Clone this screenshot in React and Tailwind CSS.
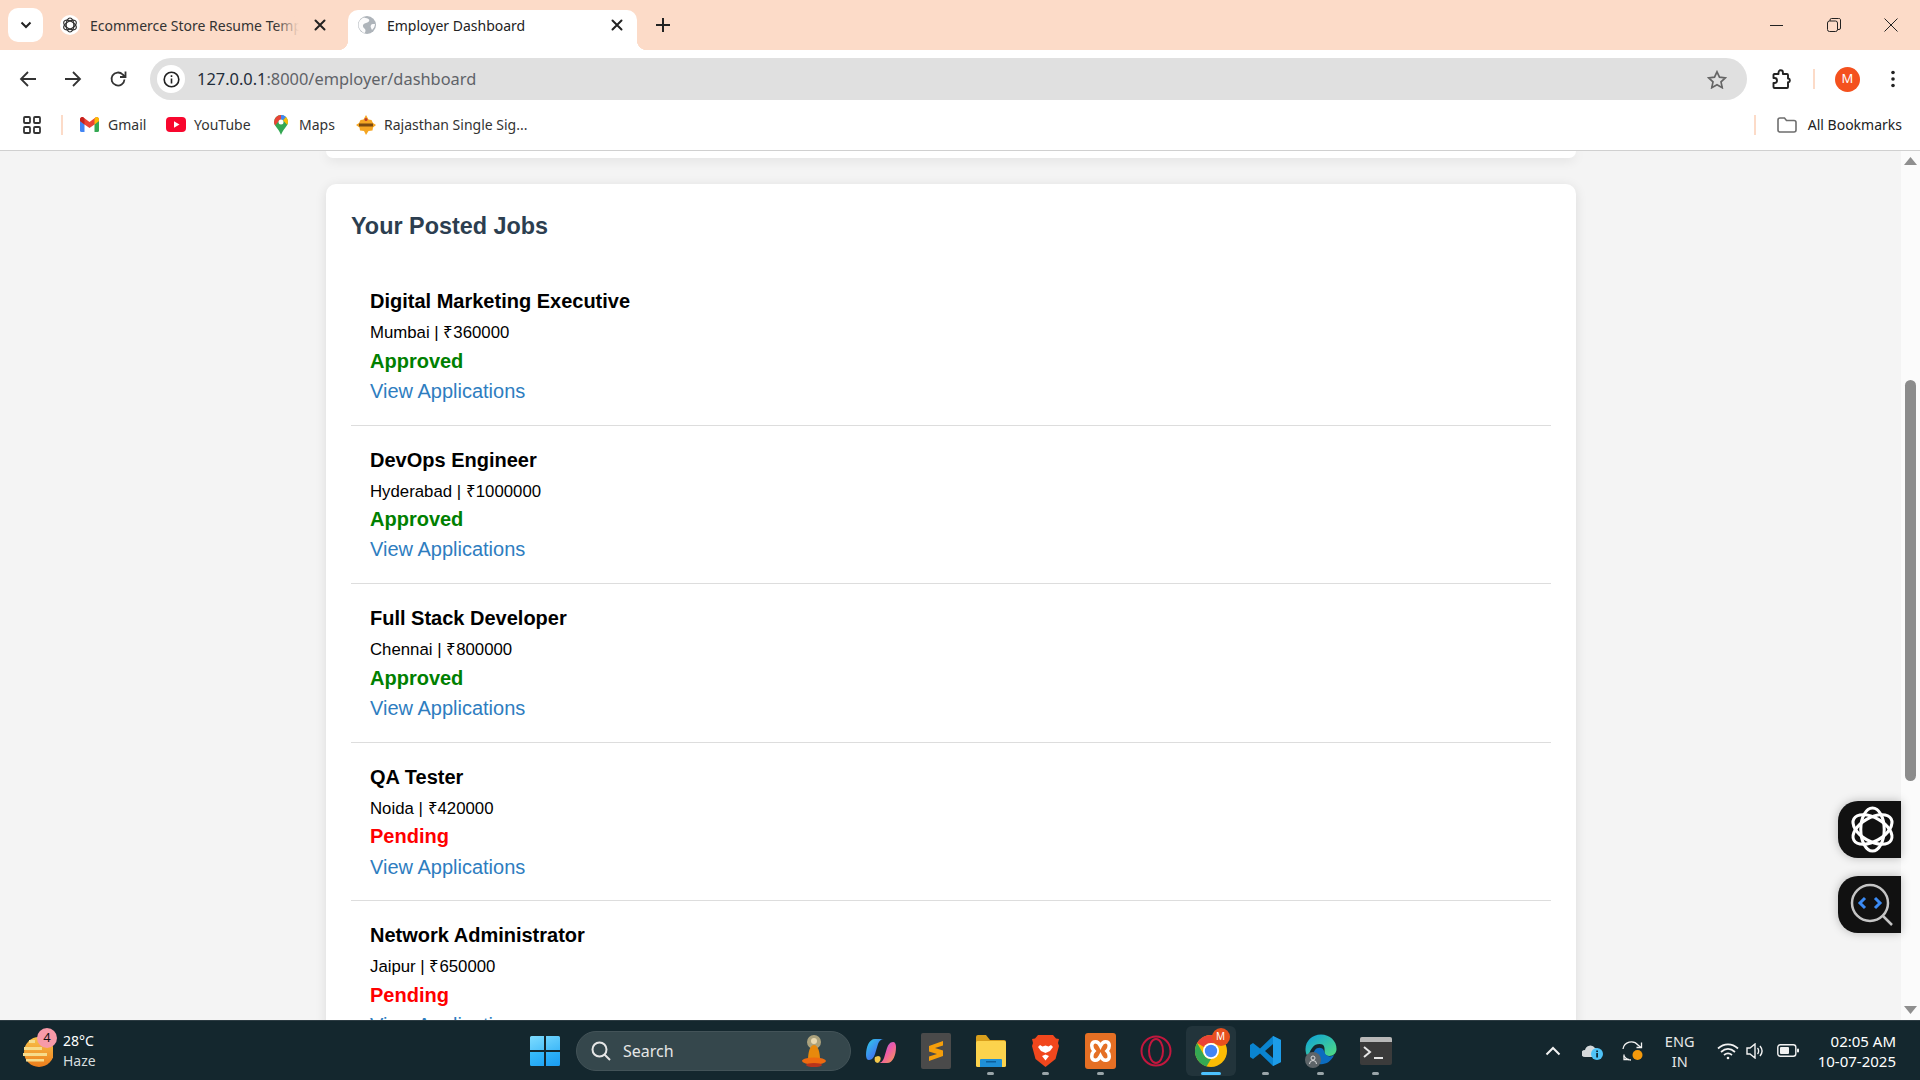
import React from "react";

const Knot = ({ size = 48, color = "#fff", sw = 3 }) => (
  <svg width={size} height={size} viewBox="0 0 48 48" fill="none" stroke={color} strokeWidth={sw}>
    <ellipse cx="24" cy="24" rx="21" ry="11.5" transform="rotate(30 24 24)" />
    <ellipse cx="24" cy="24" rx="21" ry="11.5" transform="rotate(90 24 24)" />
    <ellipse cx="24" cy="24" rx="21" ry="11.5" transform="rotate(150 24 24)" />
  </svg>
);
const Globe = () => (
  <svg width="18" height="18" viewBox="0 0 18 18">
    <circle cx="9" cy="9" r="9" fill="#aeb4ba" />
    <path d="M6 1.500c2 1 4 .5 5 2s-1 3-3 3.500-3.500 1.500-3 3.500 2.500 2 2.500 4-1 2.500-1.500 2.500C3 15.500.5 12 .5 9 .5 5.500 3 2.500 6 1.500zM17 8c-1.500 0-3-.5-4 1s0 3 1 5c1.500-1.500 3-3.500 3-6z" fill="#fff" opacity=".95" />
  </svg>
);
const X = ({ size = 12, sw = 2, color = "#222" }) => (
  <svg width={size} height={size} viewBox="0 0 12 12" stroke={color} strokeWidth={sw} strokeLinecap="round"><path d="M1.500 1.500l9 9M10.500 1.500l-9 9" /></svg>
);
const Arrow = ({ flip }) => (
  <svg width="18" height="18" viewBox="0 0 18 18" fill="none" stroke="#333" strokeWidth="1.800" className={flip ? "rotate-180" : ""}><path d="M17 9H2M9 2L2 9l7 7" /></svg>
);
const Reload = () => (
  <svg width="18" height="18" viewBox="0 0 18 18" fill="none" stroke="#333" strokeWidth="1.800"><path d="M15.500 9.500a6.500 6.500 0 1 1-1.800-5L16 6.500" /><path d="M16.500 1.500v5.500H11" fill="none" /></svg>
);
const Info = () => (
  <span className="w-[28px] h-[28px] rounded-full bg-white flex items-center justify-center">
    <svg width="17" height="17" viewBox="0 0 17 17" fill="none" stroke="#222" strokeWidth="1.600"><circle cx="8.500" cy="8.500" r="7.300" /><path d="M8.500 7.500v5M8.500 4.200v1.700" /></svg>
  </span>
);
const Gmail = () => (
  <svg width="19" height="15" viewBox="0 0 19 15">
    <path d="M0 3v10.500A1.500 1.500 0 0 0 1.500 15H4.500V7z" fill="#4285f4" />
    <path d="M19 3v10.500a1.500 1.500 0 0 1-1.500 1.500H14.500V7z" fill="#34a853" />
    <path d="M0 2.500C0 .5 2 -.5 3.500.5L9.500 5l6-4.500C17-.5 19 .5 19 2.500V4l-4.500 3.500-5 3.500-5-3.500L0 4z" fill="#ea4335" />
    <path d="M14.500 1.800l1-1.300C17-.5 19 .5 19 2.500V4l-4.500 3.500z" fill="#fbbc04" />
    <path d="M0 2.500C0 .5 2-.5 3.500.5l1 1.300v5.700L0 4z" fill="#c5221f" />
  </svg>
);
const YouTube = () => (
  <svg width="20" height="15" viewBox="0 0 20 15"><rect width="20" height="15" rx="4" fill="#f8072e" /><path d="M8 4.300v6.400l5.500-3.200z" fill="#fff" /></svg>
);
const MapsPin = () => (
  <svg width="14" height="20" viewBox="0 0 14 20">
    <path d="M7 0a7 7 0 0 1 7 7c0 4-5 7-7 13C5 14 0 11 0 7a7 7 0 0 1 7-7z" fill="#34a853" />
    <path d="M2 2.200A7 7 0 0 1 7 0v4.500A2.500 2.500 0 0 0 4.800 6L1.200 10.500C.4 9.300 0 8.200 0 7a7 7 0 0 1 2-4.800z" fill="#ea4335" />
    <path d="M7 0a7 7 0 0 1 5 2L9 5.200A2.500 2.500 0 0 0 7 4.500z" fill="#4285f4" />
    <path d="M12 2a7 7 0 0 1 2 5c0 1-.3 1.800-.8 2.800L9 5.200z" fill="#fbbc04" />
    <circle cx="7" cy="7" r="2.500" fill="#fff" />
  </svg>
);
const Rajasthan = () => (
  <svg width="20" height="20" viewBox="0 0 20 20">
    <path d="M10 0l2.500 4.500 3 .5 1.500 3 3 2-3 2.500-.5 3-4 .5L10 20l-2-4-4-.5-.5-3L0 10l3-2 1.500-3 3-.5z" fill="#f5a623" />
    <rect x="3" y="8.500" width="14" height="3" fill="#7a4a12" />
    <circle cx="10" cy="4.500" r="1.500" fill="#c0392b" />
  </svg>
);
const GridIcon = () => (
  <svg width="18" height="18" viewBox="0 0 18 18" fill="none" stroke="#333" strokeWidth="1.800">
    <rect x="1" y="1" width="6" height="6" rx="1" /><rect x="11" y="1" width="6" height="6" rx="1" />
    <rect x="1" y="11" width="6" height="6" rx="1" /><rect x="11" y="11" width="6" height="6" rx="1" />
  </svg>
);
const Folder = () => (
  <svg width="20" height="16" viewBox="0 0 20 16" fill="none" stroke="#6e6e6e" strokeWidth="1.600"><path d="M1 3a2 2 0 0 1 2-2h4.500l2 2.500H17a2 2 0 0 1 2 2V13a2 2 0 0 1-2 2H3a2 2 0 0 1-2-2z" /></svg>
);
const Star = () => (
  <svg width="20" height="19" viewBox="0 0 20 19" fill="none" stroke="#666" strokeWidth="1.700"><path d="M10 1.800l2.500 5.400 5.800.7-4.300 4 1.200 5.800-5.200-2.900-5.200 2.900L6 11.900l-4.300-4 5.800-.7z" /></svg>
);
const Puzzle = () => (
  <svg width="21" height="21" viewBox="0 0 21 21" fill="none" stroke="#222" strokeWidth="1.900" strokeLinejoin="round">
    <path d="M3 5h4.500V3.500a2.200 2.200 0 0 1 4.400 0V5H16a1 1 0 0 1 1 1v3.500h.5a2 2 0 0 1 0 3.800H17V18a1 1 0 0 1-1 1H3.500a1 1 0 0 1-1-1v-4h1a2.500 2.500 0 0 0 0-5h-1V6a1 1 0 0 1 .5-1z" />
  </svg>
);
const Kebab = () => (
  <svg width="6" height="18" viewBox="0 0 6 18" fill="#222"><circle cx="3" cy="2.500" r="1.800" /><circle cx="3" cy="9" r="1.800" /><circle cx="3" cy="15.500" r="1.800" /></svg>
);
const WinLogo = () => (
  <svg width="30" height="30" viewBox="0 0 30 30">
    <defs>
      <linearGradient id="wg1" x1="0" y1="0" x2="1" y2="1"><stop offset="0" stopColor="#7ddcff" /><stop offset="1" stopColor="#3fb8f8" /></linearGradient>
      <linearGradient id="wg2" x1="0" y1="0" x2="1" y2="1"><stop offset="0" stopColor="#38bdfb" /><stop offset="1" stopColor="#1a9cf2" /></linearGradient>
    </defs>
    <path d="M0 1.500A1.500 1.500 0 0 1 1.500 0H14v14H0zM16 0h12.500A1.500 1.500 0 0 1 30 1.500V14H16z" fill="url(#wg1)" />
    <path d="M0 16h14v14H1.500A1.500 1.500 0 0 1 0 28.500zM16 16h14v12.500a1.500 1.500 0 0 1-1.500 1.500H16z" fill="url(#wg2)" />
  </svg>
);
const Monk = () => (
  <svg width="28" height="34" viewBox="0 0 28 34">
    <circle cx="14" cy="8" r="7" fill="#c9b98a" opacity=".8" />
    <circle cx="14" cy="7" r="3" fill="#e8d8b0" />
    <path d="M8 26c0-8 2-15 6-15s6 7 6 15z" fill="#e8890c" />
    <ellipse cx="14" cy="27" rx="12" ry="3.500" fill="#ee6a10" />
    <ellipse cx="14" cy="31" rx="8" ry="2" fill="#b8341c" />
  </svg>
);
const Copilot = () => (
  <svg width="30" height="30" viewBox="0 0 30 30">
    <defs>
      <linearGradient id="cp1" x1="0" y1="0" x2="1" y2="1"><stop offset="0" stopColor="#2fd0e8" /><stop offset=".6" stopColor="#3f7cf0" /><stop offset="1" stopColor="#38d08a" /></linearGradient>
      <linearGradient id="cp2" x1="0" y1="0" x2="1" y2="1"><stop offset="0" stopColor="#8a6cf5" /><stop offset=".5" stopColor="#ee5aa8" /><stop offset="1" stopColor="#f6a04a" /></linearGradient>
    </defs>
    <path d="M21 27h-9c3 0 5-2 6-5l3-10c1-3 3-6 6-6 2 0 3 2 3 5 0 8-3 16-9 16z" fill="url(#cp2)" />
    <path d="M9 3h9c-3 0-5 2-6 5L9 18c-1 3-3 6-6 6-2 0-3-2-3-5C0 11 3 3 9 3z" fill="url(#cp1)" />
    <path d="M12 27c-3 0-4-3-3-6l3-1c3 0 3 3 2 5z" fill="#f4c84a" />
  </svg>
);
const Sublime = () => (
  <svg width="30" height="36" viewBox="0 0 30 36">
    <rect width="30" height="36" rx="2" fill="#4a4a4a" />
    <path d="M22 8L8 13v5l14 4.500v-5l-8-2.500 8-2.500zM8 28l14-5v-5L8 13.500v5l8 2.500-8 2.500z" fill="#f59e0b" />
  </svg>
);
const Files = () => (
  <svg width="30" height="32" viewBox="0 0 30 32">
    <path d="M0 2a2 2 0 0 1 2-2h8l4 5h14a2 2 0 0 1 2 2v4H0z" fill="#d99f1c" />
    <rect y="6" width="30" height="26" rx="1.500" fill="#fcd34d" />
    <path d="M5 24h20a1 1 0 0 1 1 1v7H4v-7a1 1 0 0 1 1-1z" fill="#1f8fd6" />
    <rect x="10" y="26" width="10" height="1.500" fill="#0b5f9c" />
  </svg>
);
const Brave = () => (
  <svg width="27" height="32" viewBox="0 0 27 32">
    <path d="M6 0h15l3 3.500 3 .5-1 4 1 3-3.500 13L13.500 32 3.500 24 0 11l1-3-1-4 3-.5z" fill="#f1471d" />
    <path d="M13.500 18l-4.500-2-3-4 2-2 2.500 1.500 3-1 3 1L19 10l2 2-3 4zM10 21l3.500-1.500L17 21l-3.500 4.500z" fill="#fff" />
  </svg>
);
const Xampp = () => (
  <svg width="31" height="36" viewBox="0 0 31 36">
    <rect width="31" height="36" rx="3" fill="#e56f24" />
    <path d="M9 9c3-1 5 1 6.500 4C17 10 19 8 22 9c3 1 3 6 0 9 3 3 3 8 0 9-3 1-5-1-6.500-4C14 26 12 28 9 27c-3-1-3-6 0-9-3-3-3-8 0-9z" fill="none" stroke="#fff" strokeWidth="3.500" />
  </svg>
);
const Opera = () => (
  <svg width="32" height="32" viewBox="0 0 32 32" fill="none" stroke="#c3173e" strokeWidth="2">
    <circle cx="16" cy="16" r="14.500" /><ellipse cx="16" cy="16" rx="7" ry="12" />
  </svg>
);
const Chrome = () => (
  <svg width="32" height="32" viewBox="0 0 32 32">
    <circle cx="16" cy="16" r="16" fill="#fbbc04" />
    <path d="M16 0a16 16 0 0 1 13.900 8H16a8 8 0 0 0-7 4L2.100 8A16 16 0 0 1 16 0z" fill="#ea4335" />
    <path d="M2.100 8L9 20a8 8 0 0 0 7 4l-4.500 7.400A16 16 0 0 1 2.100 8z" fill="#34a853" />
    <circle cx="16" cy="16" r="8" fill="#fff" /><circle cx="16" cy="16" r="6.200" fill="#4285f4" />
  </svg>
);
const VSCode = () => (
  <svg width="32" height="32" viewBox="0 0 32 32">
    <path d="M23 1l8 4v22l-8 4-13-12.500L3 24l-3-2v-12l3-2 7 5.500zM23 9l-8 7 8 7z" fill="#0a84d0" />
    <path d="M23 1l8 4v22l-8 4z" fill="#1d9ce8" />
  </svg>
);
const Edge = () => (
  <svg width="32" height="34" viewBox="0 0 32 34">
    <defs>
      <linearGradient id="edg" x1="0" y1="0" x2="1" y2="1"><stop offset="0" stopColor="#0b9fdc" /><stop offset="1" stopColor="#52dc80" /></linearGradient>
    </defs>
    <path d="M16 .5C25 .5 31.500 7 31.500 15c0 4-3 7-7 7-3 0-5-1-5-3 0-4 1-9-5-9S6 15 4 20C2 24 .5 19 .5 15 .5 7 7 .5 16 .5z" fill="url(#edg)" />
    <path d="M10 16c2-3 8-3 9 1 1 5 6 7 10 4-3 7-9 10-15 9-5-2-8-9-4-14z" fill="#0c6cc0" />
    <circle cx="8" cy="26" r="8" fill="#5d6468" />
    <circle cx="8" cy="24" r="2" fill="none" stroke="#ddd" strokeWidth="1" />
    <path d="M4.500 30a3.500 3.500 0 0 1 7 0" fill="none" stroke="#ddd" strokeWidth="1" />
  </svg>
);
const Terminal = () => (
  <svg width="32" height="28" viewBox="0 0 32 28">
    <rect width="32" height="28" rx="2" fill="#3b3b3b" />
    <path d="M2 0h28a2 2 0 0 1 2 2v3H0V2a2 2 0 0 1 2-2z" fill="#b8b8b8" />
    <path d="M4 10l6 5-6 5" fill="none" stroke="#e6e6e6" strokeWidth="2" />
    <path d="M14 21h9" stroke="#e6e6e6" strokeWidth="2" />
  </svg>
);
const Sun = () => (
  <svg width="30" height="36" viewBox="0 0 30 36">
    <defs><linearGradient id="sun" x1="0" y1="0" x2="0" y2="1"><stop offset="0" stopColor="#f8c34a" /><stop offset="1" stopColor="#ec7d1c" /></linearGradient></defs>
    <circle cx="16" cy="19" r="15" fill="url(#sun)" />
    <path d="M6 7h6v3H6zM1 14h18v3H1zM0 20h24v3H0zM3 26h18v2.500H3z" fill="#f6dc8c" />
  </svg>
);
const Cloud = () => (
  <svg width="22" height="20" viewBox="0 0 22 20">
    <path d="M3 16a3.500 3.500 0 0 1 0-7 5.500 5.500 0 0 1 10-2 4 4 0 0 1 4 6v3z" fill="#d5d9db" />
    <circle cx="15" cy="13" r="6" fill="#4fc3f7" />
    <rect x="14.200" y="12" width="1.800" height="4.500" fill="#0f2a36" /><rect x="14.200" y="9.500" width="1.800" height="1.600" fill="#0f2a36" />
  </svg>
);
const Sync = () => (
  <svg width="22" height="22" viewBox="0 0 22 22" fill="none" stroke="#f2f2f2" strokeWidth="1.300">
    <path d="M1 9a8.500 8.500 0 0 1 15-4l3 2.500" /><path d="M19.500 2.500v5h-5" /><path d="M2 14.500v5h5" /><path d="M2 16a8.500 8.500 0 0 0 7 4" />
    <circle cx="15.500" cy="15" r="5" fill="#f59a0c" stroke="none" />
  </svg>
);
const Wifi = () => (
  <svg width="22" height="18" viewBox="0 0 22 18" fill="none" stroke="#f2f2f2" strokeWidth="1.700">
    <path d="M1 6.500c6-5.500 14-5.500 20 0M4 10c4.500-4 9.500-4 14 0M7 13c2.500-2 5.500-2 8 0" /><circle cx="11" cy="16" r="1.300" fill="#f2f2f2" stroke="none" />
  </svg>
);
const Volume = () => (
  <svg width="20" height="16" viewBox="0 0 20 16" fill="none" stroke="#f2f2f2" strokeWidth="1.400">
    <path d="M1 5h3l5-4v14l-5-4H1zM11.500 5c1.500 1.500 1.500 4.500 0 6M14 3c2.500 3 2.500 7 0 10" />
  </svg>
);
const Battery = () => (
  <svg width="22" height="13" viewBox="0 0 22 13" fill="none">
    <rect x=".8" y=".8" width="18" height="11.400" rx="2.500" stroke="#f2f2f2" strokeWidth="1.400" />
    <rect x="3" y="3" width="9" height="7" rx="1" fill="#f2f2f2" /><rect x="20" y="4.500" width="2" height="4" rx="1" fill="#f2f2f2" />
  </svg>
);

const Bookmark = ({ icon, label, cls }) => (
  <div className={`flex items-center ${cls}`}>{icon}<span className="text-[14px] text-[#333]">{label}</span></div>
);

const TaskIcon = ({ children, dot, active }) => (
  <div className="relative w-[55px] h-[50px] flex items-center justify-center">
    {active && <span className="absolute left-[3px] top-0 w-[50px] h-[50px] rounded-md bg-[#22343b]" />}
    <span className="relative flex">{children}</span>
    {dot && <span className="absolute bottom-[1px] left-[24px] w-[7px] h-[3px] rounded-full bg-[#9aa5a9]" />}
    {active && <span className="absolute bottom-[1px] left-[18px] w-[20px] h-[3px] rounded-full bg-[#4cc2ff]" />}
  </div>
);

const jobs = [
  ["Digital Marketing Executive", "Mumbai | ₹360000", "Approved"],
  ["DevOps Engineer", "Hyderabad | ₹1000000", "Approved"],
  ["Full Stack Developer", "Chennai | ₹800000", "Approved"],
  ["QA Tester", "Noida | ₹420000", "Pending"],
  ["Network Administrator", "Jaipur | ₹650000", "Pending"],
];

export default function App() {
  return (
    <div className="h-screen w-full flex flex-col overflow-hidden bg-white font-['Noto_Sans','Open_Sans',sans-serif]">
      {/* tab strip */}
      <div className="h-[50px] shrink-0 bg-[#fcdbc8] flex items-end relative">
        <div className="absolute left-[8px] top-[8px] w-[35px] h-[34px] bg-white rounded-[10px] flex items-center justify-center">
          <svg width="12" height="8" viewBox="0 0 12 8" fill="none" stroke="#222" strokeWidth="2"><path d="M1.500 1.500L6 6l4.500-4.500" /></svg>
        </div>
        <div className="ml-[60px] w-[288px] h-[40px] pb-[10px] flex items-center relative">
          <span className="w-[20px] h-[20px] rounded-full bg-white flex items-center justify-center"><Knot size={16} color="#333" sw={3.500} /></span>
          <span className="ml-[10px] w-[209px] overflow-hidden whitespace-nowrap text-[14px] text-[#333] relative">
            Ecommerce Store Resume Temp
            <span className="absolute right-0 top-0 bottom-0 w-[24px] bg-gradient-to-r from-transparent to-[#fcdbc8]" />
          </span>
          <span className="ml-[15px] flex"><X /></span>
        </div>
        <div className="w-[289px] h-[40px] pb-[10px] bg-white rounded-t-[10px] flex items-center relative pl-[10px]">
          <span className="absolute -left-[10px] bottom-0 w-[10px] h-[10px] bg-[radial-gradient(circle_at_0_0,transparent_10px,white_10.500px)]" />
          <span className="absolute -right-[10px] bottom-0 w-[10px] h-[10px] bg-[radial-gradient(circle_at_100%_0,transparent_10px,white_10.500px)]" />
          <Globe />
          <span className="ml-[11px] text-[14px] text-[#222] whitespace-nowrap">Employer Dashboard</span>
          <span className="absolute left-[263px] top-[9px] flex"><X /></span>
        </div>
        <div className="ml-[19px] h-[40px] pb-[10px] flex items-center">
          <svg width="14" height="14" viewBox="0 0 14 14" stroke="#222" strokeWidth="2"><path d="M7 0v14M0 7h14" /></svg>
        </div>
        <div className="ml-auto h-[50px] flex items-center pr-[22px] gap-[43px]">
          <svg width="14" height="14" viewBox="0 0 14 14" stroke="#222" strokeWidth="1"><path d="M0 7.500h13" /></svg>
          <svg width="14" height="14" viewBox="0 0 14 14" fill="none" stroke="#222" strokeWidth="1"><rect x=".5" y="3" width="10" height="10.500" rx="2" /><path d="M3 3V2a1.500 1.500 0 0 1 1.500-1.500h7A1.500 1.500 0 0 1 13.500 2v8a1.500 1.500 0 0 1-1.500 1.500h-1.500" /></svg>
          <svg width="14" height="14" viewBox="0 0 14 14" stroke="#222" strokeWidth="1"><path d="M.5.5l13 13M13.500.5l-13 13" /></svg>
        </div>
      </div>

      {/* toolbar */}
      <div className="h-[50px] shrink-0 bg-white rounded-t-[10px] flex items-center pt-[8px] relative">
        <div className="w-[150px] flex items-center pl-[19px] gap-[27px] shrink-0">
          <Arrow /><Arrow flip /><Reload />
        </div>
        <div className="w-[1597px] h-[42px] rounded-full bg-[#e0e0e0] flex items-center pl-[7px] pr-[20px] shrink-0">
          <Info />
          <span className="ml-[12px] text-[16.400px] text-[#5f6368] whitespace-nowrap"><span className="text-[#1f2d3a]">127.0.0.1</span>:8000/employer/dashboard</span>
          <span className="ml-auto flex"><Star /></span>
        </div>
        <div className="ml-[24px] flex"><Puzzle /></div>
        <span className="ml-[21px] w-[2px] h-[20px] bg-[#fcdbc8]" />
        <span className="ml-[20px] w-[25px] h-[25px] rounded-full bg-[#f4511e] text-white text-[13px] flex items-center justify-center">M</span>
        <span className="ml-[30px] flex"><Kebab /></span>
      </div>

      {/* bookmarks */}
      <div className="h-[51px] shrink-0 bg-white border-b border-[#d0d0d0] flex items-center pb-[1px]">
        <div className="ml-[23px] flex"><GridIcon /></div>
        <span className="ml-[20px] w-[2px] h-[20px] bg-[#fcdbc8]" />
        <Bookmark cls="ml-[17px] gap-[9px] w-[86px]" icon={<Gmail />} label="Gmail" />
        <Bookmark cls="gap-[8px] w-[108px]" icon={<YouTube />} label="YouTube" />
        <Bookmark cls="gap-[11px] w-[82px]" icon={<MapsPin />} label="Maps" />
        <Bookmark cls="gap-[8px]" icon={<Rajasthan />} label="Rajasthan Single Sig..." />
        <span className="ml-auto w-[2px] h-[20px] bg-[#fcdbc8]" />
        <div className="ml-[21px] mr-[18px] flex items-center gap-[11px]">
          <Folder /><span className="text-[14px] text-[#222]">All Bookmarks</span>
        </div>
      </div>

      {/* viewport */}
      <div className="flex-1 min-h-0 flex relative">
        <main className="flex-1 min-w-0 bg-[#f4f4f4] overflow-hidden font-['Liberation_Sans',Arial,sans-serif]">
          <div className="w-[1250px] ml-[326px] h-[7px] bg-white rounded-b-[10px] shadow-[0_2px_12px_rgba(0,0,0,0.1)]" />
          <div className="w-[1250px] ml-[326px] mt-[26px] bg-white rounded-[10px] shadow-[0_2px_12px_rgba(0,0,0,0.1)] px-[25px] pt-[29px]">
            <h2 className="text-[23.400px] leading-[26px] font-bold text-[#2c3e50] mb-[28px]">Your Posted Jobs</h2>
            {jobs.map(([title, meta, status]) => (
              <div key={title} className="border-b border-[#dddddd] pl-[19px] pt-[23px] pb-[21.700px]">
                <div className="text-[20px] leading-[23px] font-bold text-black">{title}</div>
                <div className="text-[16.800px] leading-[19px] text-black mt-[10px]">{meta}</div>
                <div className={`text-[20px] leading-[23px] font-bold mt-[7.700px] ${status === "Approved" ? "text-[#008000]" : "text-[#ff0000]"}`}>{status}</div>
                <div className="text-[20px] leading-[23px] text-[#2e7dbf] mt-[7.200px]">View Applications</div>
              </div>
            ))}
          </div>
        </main>
        <div className="w-[19px] shrink-0 bg-[#fbfbfb] flex flex-col items-center relative">
          <svg className="mt-[6px]" width="13" height="8" viewBox="0 0 13 8" fill="#8f8f8f"><path d="M6.500 0L13 8H0z" /></svg>
          <div className="mt-[215px] w-[11px] h-[401px] rounded-full bg-[#8c8c8c]" />
          <svg className="mt-auto mb-[6px]" width="13" height="8" viewBox="0 0 13 8" fill="#8f8f8f"><path d="M6.500 8L0 0h13z" /></svg>
        </div>
        <div className="absolute left-[1838px] top-[650px] w-[63px] h-[57px] bg-[#111111] rounded-l-[20px] shadow-[0_0_10px_rgba(0,0,0,0.25)] flex items-center pl-[10px]">
          <Knot size={49} sw={3} />
        </div>
        <div className="absolute left-[1838px] top-[725px] w-[63px] h-[57px] bg-[#111111] rounded-l-[20px] shadow-[0_0_10px_rgba(0,0,0,0.25)] flex items-center pl-[12px]">
          <svg width="44" height="44" viewBox="0 0 44 44" fill="none">
            <circle cx="20" cy="20" r="18" stroke="#c4c4c4" strokeWidth="2.500" />
            <path d="M33 33l9 9" stroke="#c4c4c4" strokeWidth="2.500" />
            <path d="M15 15l-5 5 5 5M25 15l5 5-5 5" stroke="#3b8bf5" strokeWidth="3" />
          </svg>
        </div>
      </div>

      {/* taskbar */}
      <div className="h-[60px] shrink-0 bg-[#14272e] border-t border-[#2c3b42] flex items-center font-['Noto_Sans','Open_Sans',sans-serif]">
        <div className="w-[530px] shrink-0 pl-[23px] flex items-center relative">
          <Sun />
          <span className="absolute left-[37px] -top-[3px] w-[20px] h-[20px] rounded-full bg-[#f79aa8] text-[#111] text-[13px] flex items-center justify-center">4</span>
          <div className="ml-[10px] flex flex-col leading-[20px] text-[14px]">
            <span className="text-white">28°C</span>
            <span className="text-[#d6dcde]">Haze</span>
          </div>
        </div>
        <div className="w-[30px] flex"><WinLogo /></div>
        <div className="ml-[16px] w-[275px] h-[40px] rounded-full bg-[#35474c] border border-[#435358] flex items-center pl-[14px] pr-[22px]">
          <svg width="20" height="20" viewBox="0 0 20 20" fill="none" stroke="#e6e6e6" strokeWidth="2"><circle cx="8.500" cy="8.500" r="7" /><path d="M13.500 13.500L19 19" /></svg>
          <span className="ml-[12px] text-[16px] text-[#e6e6e6]">Search</span>
          <span className="ml-auto flex"><Monk /></span>
        </div>
        <div className="ml-[2px] flex items-center">
          <TaskIcon><Copilot /></TaskIcon>
          <TaskIcon><Sublime /></TaskIcon>
          <TaskIcon dot><Files /></TaskIcon>
          <TaskIcon dot><Brave /></TaskIcon>
          <TaskIcon dot><Xampp /></TaskIcon>
          <TaskIcon><Opera /></TaskIcon>
          <TaskIcon active>
            <Chrome />
            <span className="absolute left-[17px] -top-[7px] w-[18px] h-[18px] rounded-full bg-[#e8501e] text-white text-[10px] flex items-center justify-center">M</span>
          </TaskIcon>
          <TaskIcon dot><VSCode /></TaskIcon>
          <TaskIcon dot><Edge /></TaskIcon>
          <TaskIcon dot><Terminal /></TaskIcon>
        </div>
        <div className="ml-auto flex items-center pr-[24px]">
          <svg width="16" height="10" viewBox="0 0 16 10" fill="none" stroke="#f2f2f2" strokeWidth="2"><path d="M1.500 8.500L8 2l6.500 6.500" /></svg>
          <span className="ml-[21.500px] flex"><Cloud /></span>
          <span className="ml-[18px] flex"><Sync /></span>
          <div className="ml-[20.500px] w-[30px] flex flex-col items-center text-[14.500px] leading-[20px] text-[#e6e6e6]"><span>ENG</span><span>IN</span></div>
          <span className="ml-[22px] flex"><Wifi /></span>
          <span className="ml-[7px] flex"><Volume /></span>
          <span className="ml-[11px] flex"><Battery /></span>
          <div className="ml-[19px] flex flex-col items-end text-[15px] leading-[20px] text-white"><span>02:05 AM</span><span>10-07-2025</span></div>
        </div>
      </div>
    </div>
  );
}
